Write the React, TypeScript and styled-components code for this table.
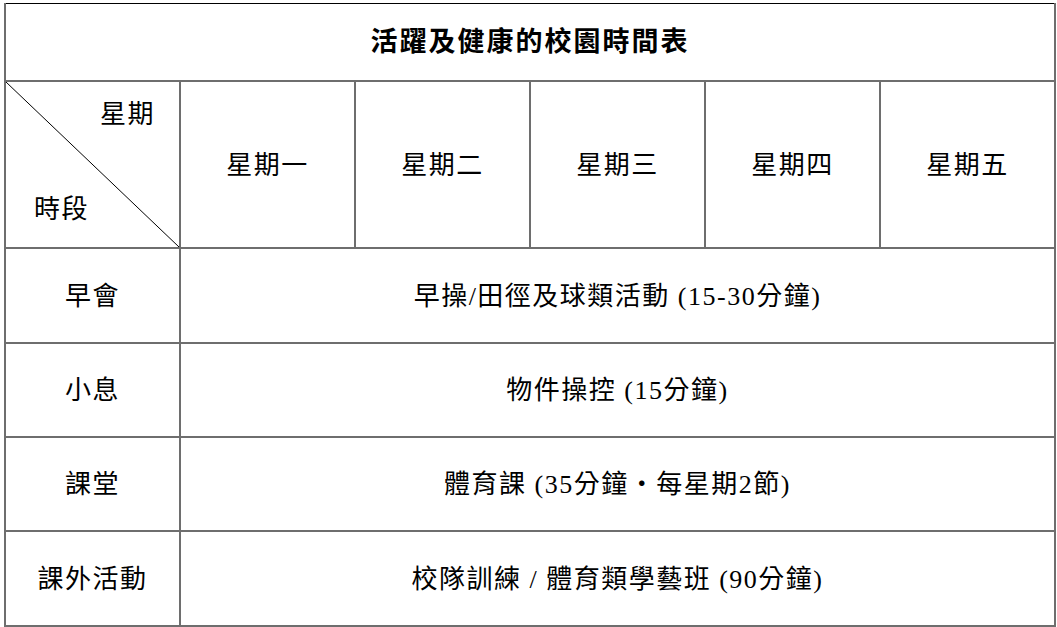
import styled, { createGlobalStyle } from "styled-components";

const GlobalStyle = createGlobalStyle`
  html, body {
    margin: 0;
    padding: 0;
    background: #ffffff;
  }
  body {
    font-family: "Liberation Serif", "Noto Sans CJK TC", serif;
    color: #000;
  }
`

const Page = styled.div`
  padding: 3px 3px 0 4px;
`

const Table = styled.table`
  width: 1050px;
  table-layout: fixed;
  border-collapse: collapse;
  border-top: 1px solid #000;
`

const Column = styled.col`
  width: 175px;
`

const Cell = styled.td<{ $h?: number }>`
  border: 2px solid #6e6e6e;
  height: ${(p) => (p.$h ? `${p.$h}px` : "auto")};
  padding: 2px 0 0;
  text-align: center;
  vertical-align: middle;
  font-size: 26px;
  line-height: 1.2;
  letter-spacing: 1.5px;
  white-space: nowrap;
`

const TitleCell = styled(Cell)`
  border-top: 1px solid #000;
  padding: 0;
  font-weight: 700;
  font-size: 27px;
  letter-spacing: 2px;
`

const CornerCell = styled(Cell)`
  padding: 0;
`

const Corner = styled.div`
  position: relative;
  height: 165px;
  display: flex;
  flex-direction: column;
  justify-content: space-between;
  padding: 17px 24px 22px 28px;
  box-sizing: border-box;
`

const Diagonal = styled.svg`
  position: absolute;
  inset: 0;
  width: 100%;
  height: 100%;
`

const CornerTop = styled.span`
  align-self: flex-end;
`

const CornerBottom = styled.span`
  align-self: flex-start;
`

const days = ["星期一", "星期二", "星期三", "星期四", "星期五"];

const rows = [
  { label: "早會", text: "早操/田徑及球類活動 (15-30分鐘)", h: 91 },
  { label: "小息", text: "物件操控 (15分鐘)", h: 90 },
  { label: "課堂", text: "體育課 (35分鐘・每星期2節)", h: 90 },
  { label: "課外活動", text: "校隊訓練 / 體育類學藝班 (90分鐘)", h: 91 },
];

const App = () => {
  return (
    <Page>
      <GlobalStyle />
      <Table>
        <colgroup>
          <Column />
          {days.map((d) => (
            <Column key={d} />
          ))}
        </colgroup>
        <tbody>
          <tr>
            <TitleCell colSpan={6} $h={76}>
              活躍及健康的校園時間表
            </TitleCell>
          </tr>
          <tr>
            <CornerCell>
              <Corner>
                <Diagonal viewBox="0 0 100 100" preserveAspectRatio="none">
                  <line x1="0" y1="0" x2="100" y2="100" stroke="#000" strokeWidth="1" vectorEffect="non-scaling-stroke" />
                </Diagonal>
                <CornerTop>星期</CornerTop>
                <CornerBottom>時段</CornerBottom>
              </Corner>
            </CornerCell>
            {days.map((d) => (
              <Cell key={d}>{d}</Cell>
            ))}
          </tr>
          {rows.map((r) => (
            <tr key={r.label}>
              <Cell $h={r.h}>{r.label}</Cell>
              <Cell colSpan={5}>{r.text}</Cell>
            </tr>
          ))}
        </tbody>
      </Table>
    </Page>
  )
}

export default App;
